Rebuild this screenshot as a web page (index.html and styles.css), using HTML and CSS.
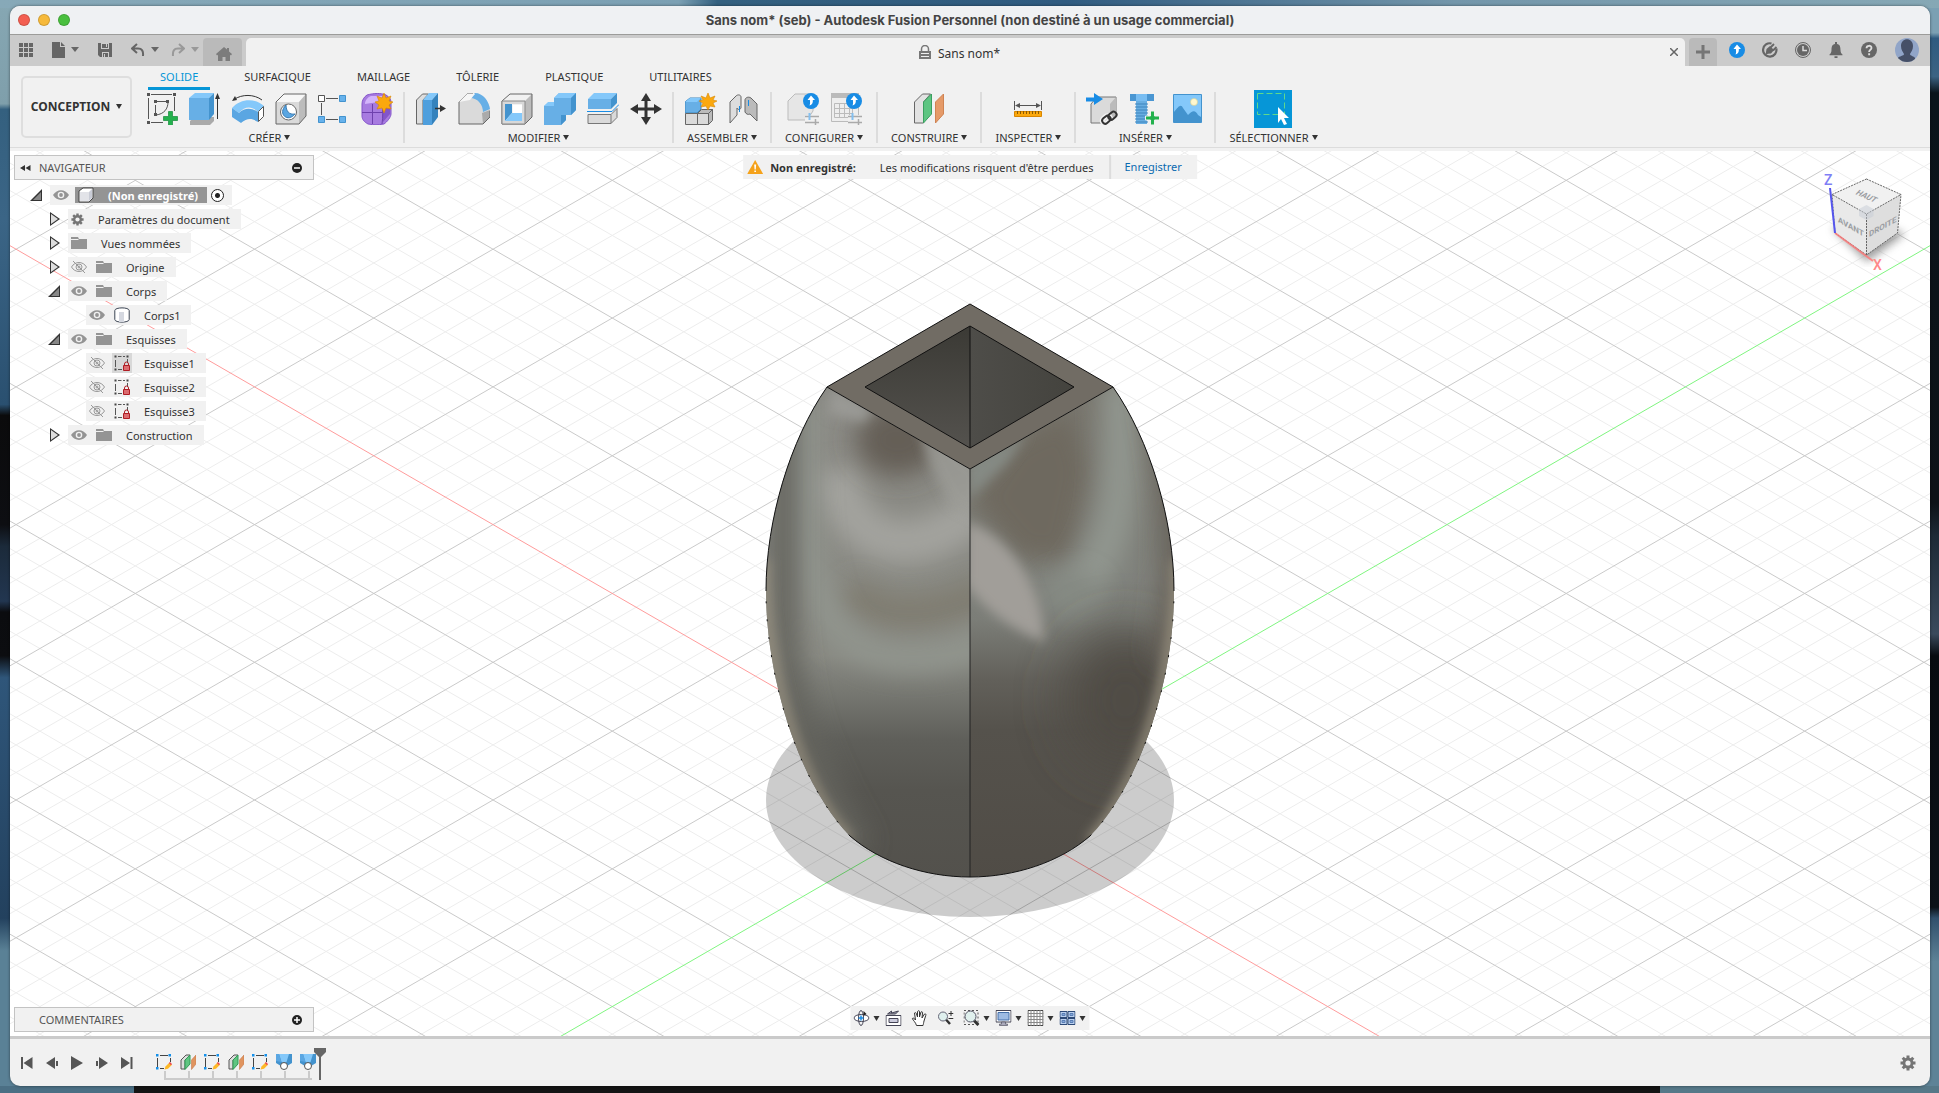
FILE: index.html
```html
<!DOCTYPE html>
<html lang="fr">
<head>
    <meta charset="UTF-8">
    <meta name="viewport" content="width=device-width, initial-scale=1.0">
    <title>Sans nom* - Autodesk Fusion</title>
    <link rel="stylesheet" href="styles.css">
</head>
<body>
    <!-- Shared icons -->
    <svg class="defs" aria-hidden="true">
        <symbol id="eye" viewBox="0 0 16 16">
            <path d="M0 8C4 1.500 12 1.500 16 8 12 14.500 4 14.500 0 8Z" fill="#949494"/>
            <circle cx="8" cy="8" r="3.300" fill="#f1f1f1"/><circle cx="8" cy="8" r="1.900" fill="#949494"/>
        </symbol>
        <symbol id="eye-off" viewBox="0 0 16 16">
            <g fill="none" stroke="#999"><path d="M.5 8C4 2 12 2 15.500 8 12 14 4 14 .5 8Z"/><circle cx="8" cy="8" r="3"/><circle cx="8" cy="8" r="1"/><path d="M2 2l12 12"/></g>
        </symbol>
        <symbol id="folder" viewBox="0 0 16 16">
            <path d="M0 2h7l1 2h8v10H0z" fill="#949494"/><path d="M0 4.500h7.500" stroke="#f1f1f1"/>
        </symbol>
        <symbol id="gear" viewBox="0 0 16 16">
            <g fill="#757575"><path d="M6.500.5h3v15h-3zM.5 6.500h15v3H.5z"/><path d="M6.500.5h3v15h-3zM.5 6.500h15v3H.5z" transform="rotate(45 8 8)"/><circle cx="8" cy="8" r="5.500"/></g>
            <circle cx="8" cy="8" r="2.600" fill="#f1f1f1"/>
        </symbol>
        <symbol id="sketch-lock" viewBox="0 0 16 16">
            <path d="M1.500 5v7M4 1.500h3.500M9 1.500h2M13.500 4v4M4 14.500h4" stroke="#555" fill="none"/>
            <path d="M.5.5h2v2h-2zM12.500.5h2v2h-2zM.5 13.500h2v2h-2z" fill="#444"/>
            <path d="M10.500 11V9a2 2 0 0 1 4 0v2" fill="none" stroke="#b01d24"/>
            <path d="M9.500 10.500h6v5h-6z" fill="#dc6b6f" stroke="#b01d24"/>
        </symbol>
        <symbol id="tl-sketch" viewBox="0 0 16 16">
            <path d="M1.500 4v9M4 1.500h8M14.500 4v4M4 14.500h4" stroke="#444" fill="none"/>
            <path d="M0 0h2.500v2.500H0zM12.500 0H15v2.500h-2.500zM0 13h2.500v2.500H0z" fill="#1590ea"/>
            <path d="M8.500 15.500l1-3 4-4 2.500 2.300-4 4z" fill="#fdb827"/><path d="M12.800 9l1.200-1 2 2-1 1.200z" fill="#ee4a55"/>
        </symbol>
        <symbol id="tl-plane" viewBox="0 0 16 16">
            <path d="M1 6l5-5h4L5 6v9H1z" fill="#ddd" stroke="#555"/>
            <path d="M5 6l5-5v9l-5 5.500z" fill="#5fc581" stroke="#339a57"/><path d="M11.500 6L16 1v9l-4.500 5.500z" fill="#e0945f" stroke="#c87a4c" stroke-width=".6"/>
        </symbol>
        <symbol id="tl-loft" viewBox="0 0 16 16">
            <path d="M0 0h16v9l-5 3H5L0 9z" fill="#4393ce"/><path d="M3 0h10l-2.500 8h-5z" fill="#84c8fa"/><path d="M0 0h3l2.500 8L0 7z" fill="#5aa6e2"/>
            <circle cx="8" cy="12" r="3.500" fill="#fff" stroke="#555"/>
        </symbol>
        <symbol id="upgrade" viewBox="0 0 16 16">
            <circle cx="8" cy="8" r="8" fill="#188ce5"/><path d="M8 2.500l4 4.500H9.800c.3 2.800-.6 4.700-3.300 5.500.8-1.600.6-3.500.4-5.500H4.500z" fill="#fff"/>
        </symbol>
    </svg>

    <div class="window">
        <header class="titlebar">
            <div class="lights">
                <button class="light close" aria-label="Fermer"></button>
                <button class="light minimize" aria-label="Réduire"></button>
                <button class="light zoom" aria-label="Agrandir"></button>
            </div>
            <h1>Sans nom* (seb) - Autodesk Fusion Personnel (non destiné à un usage commercial)</h1>
        </header>

        <div class="tabbar">
            <div class="quick">
                <button class="q-grid" aria-label="Panneau de données"><svg width="14" height="14" viewBox="0 0 14 14"><path d="M0 0h4v4H0zM5 0h4v4H5zM10 0h4v4h-4zM0 5h4v4H0zM5 5h4v4H5zM10 5h4v4h-4zM0 10h4v4H0zM5 10h4v4H5zM10 10h4v4h-4z" fill="#666"/></svg></button>
                <button class="q-file caret" aria-label="Fichier"><svg width="13" height="16" viewBox="0 0 13 16"><path d="M0 0h8v5h5v11H0zM9 0l4 4H9z" fill="#666"/></svg></button>
                <button class="q-save" aria-label="Enregistrer"><svg width="14" height="14" viewBox="0 0 14 14"><path d="M0 0h14v14H2l-2-2z" fill="#666"/><path d="M3 0h8v6H3zM4 9h7v5H4z" fill="#ccc"/><path d="M4 1h6v4H4zM5 10h5v4H5z" fill="#666"/><path d="M8 1h1v3H8zM6 11h1v3H6z" fill="#ccc"/></svg></button>
                <button class="q-undo caret" aria-label="Annuler"><svg width="14" height="14" viewBox="0 0 14 14"><path d="M6 1L1 5.500 6 10M1 5.500h6c4 0 5.500 2.500 5 7.500" fill="none" stroke="#666" stroke-width="2"/></svg></button>
                <button class="q-redo caret" aria-label="Rétablir"><svg width="14" height="14" viewBox="0 0 14 14"><path d="M8 1l5 4.500L8 10M13 5.500H7c-4 0-5.500 2.500-5 7.500" fill="none" stroke="#999" stroke-width="2"/></svg></button>
            </div>
            <button class="home" aria-label="Accueil"><svg width="16" height="14" viewBox="0 0 16 14"><path d="M8 0l3 2.600V1h2v3.500L16 7l-1 1.500-1-.7V14H9.500v-4h-3v4H2V7.800l-1 .7L0 7z" fill="#7c7c7c"/></svg></button>
            <div class="doc-tab">
                <svg width="12" height="14" viewBox="0 0 12 14"><path d="M2.500 7V4a3.500 3.500 0 0 1 7 0v3" fill="none" stroke="#777" stroke-width="1.500"/><path d="M0 6h12v8H0z" fill="#777"/><path d="M2 8.500h8M2 11.500h8" stroke="#eee"/></svg>
                <span>Sans nom*</span>
                <button class="doc-close" aria-label="Fermer l'onglet"><svg width="8" height="8" viewBox="0 0 8 8"><path d="M0 0l8 8M8 0L0 8" stroke="#666" stroke-width="1.500"/></svg></button>
            </div>
            <button class="new-tab" aria-label="Nouvel onglet"><svg width="14" height="14" viewBox="0 0 14 14"><path d="M5.500 0h3v5.500H14v3H8.500V14h-3V8.500H0v-3h5.500z" fill="#757575"/></svg></button>
            <div class="account">
                <button aria-label="Mise à niveau"><svg width="16" height="16"><use href="#upgrade"/></svg></button>
                <button aria-label="Extensions"><svg width="16" height="16" viewBox="0 0 16 16"><path d="M14.300 6.500A6.700 6.700 0 1 1 9.500 1.500" fill="none" stroke="#666" stroke-width="2.200"/><path d="M3.500 13l1-6L8 4l4 4-3 3.500-3 .3z" fill="#666"/><path d="M8.500 5.500L12 2M11 8.500L14.500 5" stroke="#666" stroke-width="1.800"/></svg></button>
                <button aria-label="État des travaux"><svg width="16" height="16" viewBox="0 0 16 16"><circle cx="8" cy="8" r="7.500" fill="none" stroke="#666"/><circle cx="8" cy="8" r="6" fill="#666"/><path d="M8 4v4.500h4" stroke="#ddd" stroke-width="1.500" fill="none"/></svg></button>
                <button aria-label="Notifications"><svg width="16" height="16" viewBox="0 0 16 16"><path d="M7 0h2v2c3 .6 3.500 3 3.500 6 0 2 .8 3.500 2 4.500v.8h-13v-.8c1.200-1 2-2.500 2-4.500 0-3 .5-5.400 3.500-6zM6.500 14.300h3V16h-3z" fill="#666"/></svg></button>
                <button aria-label="Aide"><svg width="16" height="16" viewBox="0 0 16 16"><circle cx="8" cy="8" r="8" fill="#666"/><path d="M5.500 6.200C5.500 3 10.500 3 10.500 6c0 1.800-2.400 1.800-2.400 4" fill="none" stroke="#ddd" stroke-width="1.800"/><path d="M7.200 11.300h1.900v1.900H7.200z" fill="#ddd"/></svg></button>
                <button class="avatar" aria-label="Compte"><svg width="24" height="24" viewBox="0 0 24 24"><defs><clipPath id="round"><circle cx="12" cy="12" r="12"/></clipPath></defs><g clip-path="url(#round)"><path d="M0 0h24v24H0z" fill="#91a5c8"/><path d="M6 8c0-9 12-9 12 0 0 4-2 6-3 8 0 2 4 2 5 4v5H3v-5c1-2 6-2 6-4-1-2-3-4-3-8z" fill="#465067"/></g></svg></button>
            </div>
        </div>

        <div class="ribbon">
            <button class="workspace caret">CONCEPTION</button>
            <div class="ribbon-main">
                <nav class="ribbon-tabs">
                    <button class="active">SOLIDE</button>
                    <button>SURFACIQUE</button>
                    <button>MAILLAGE</button>
                    <button>TÔLERIE</button>
                    <button>PLASTIQUE</button>
                    <button>UTILITAIRES</button>
                </nav>
                <div class="groups">
                    <section class="group">
                        <div class="tools">
                            <button aria-label="Esquisse"><svg viewBox="0 0 32 32"><g fill="none" stroke="#555"><path d="M2.500 5v21M5 1.500h21M28.500 4v14M5 29.500h12M9.500 12v8M11 8.500h9M22 9c0 7-4 12-12 13"/></g><path d="M1 0h3v3H1zM27 0h3v3h-3zM1 28h3v3H1zM8 7h3v3H8zM20 7h3v3h-3zM8 20h3v3H8z" fill="#555"/><path d="M22.500 18.500h4v5h5v4h-5v5h-4v-5h-5v-4h5z" fill="#23b14d" stroke="#168a3a" stroke-width=".7"/></svg></button>
                            <button aria-label="Extrusion"><svg viewBox="0 0 32 32"><path d="M1 28l5-4h19v4l-4 4H1z" fill="#aaa"/><path d="M0 5l6-5h19l-5 5z" fill="#84c8fa"/><path d="M0 5h20v22H0z" fill="#67afe6"/><path d="M20 5l5-5v21l-5 6z" fill="#4393ce"/><path d="M28.500 26V4" stroke="#333"/><path d="M28.500 0l2.500 6h-5z" fill="#333"/></svg></button>
                            <button aria-label="Révolution"><svg viewBox="0 0 32 32"><path d="M2 6.500C10 1 22 1 30 7" fill="none" stroke="#333"/><path d="M0 8l3-5 2 4z" fill="#333"/><path d="M0 15C9 5 23 5 32 13l-6 6c-6-6-13-6-19 1z" fill="#84c8fa"/><path d="M0 15l7 5c6-6 13-5 19-1v10c-6-4-11-4-17 1l-9-6z" fill="#5aa6e2"/><path d="M26.500 18.500l5-5v10l-5 5z" fill="#fff" stroke="#555"/></svg></button>
                            <button aria-label="Perçage"><svg viewBox="0 0 32 32"><path d="M1 9l8-8h22l-7 8z" fill="#f7f7f7"/><path d="M24 9l7-8v22l-7 8z" fill="#bcbcbc"/><path d="M1 9h23v22H1z" fill="#dadada"/><path d="M1 9l8-8h22v22l-7 8H1z" fill="none" stroke="#666"/><circle cx="13.500" cy="19" r="8" fill="#fff" stroke="#666"/><path d="M11 12c-9 9 2 18 9 9-6 1-9-3-9-9z" fill="#5aa6e2" stroke="#3a7ab0"/></svg></button>
                            <button aria-label="Réseau"><svg viewBox="0 0 32 32"><path d="M8 5.500h12M3.500 10v12M8 26.500h12" stroke="#555"/><path d="M.5 2.500h6v6h-6z" fill="#fff" stroke="#555"/><path d="M21.500 2.500h6v6h-6zM.5 23.500h6v6h-6zM21.500 23.500h6v6h-6z" fill="#67b2ec" stroke="#4393ce"/></svg></button>
                            <button aria-label="Créer une forme"><svg viewBox="0 0 32 32"><path d="M1 11c0-4 2-7 5-9 7-2 14-2 19 0 3 2 5 4 5 7v12c0 3-4 8-7 10-6 1-10 1-16 0-4-2-6-5-6-8z" fill="#a77be0" stroke="#8455c9"/><path d="M4 11c0-4 3-7 6-8h12l-4 6c-5 1-10 1-14 2z" fill="#d3b4fb"/><path d="M21 12l8-5v14l-7 8z" fill="#8455c9"/><path d="M11.500 11v20M1 19.500h21M21 10c1 7 1 14 0 21" stroke="#6d40ad" fill="none"/><path d="M23 0l2 5 5-2-2 5 4 1-4 3 2 4-5-1-2 5-2-5-5 1 2-4-4-3 4-1-2-5 5 2z" fill="#fba80d" stroke="#d98600" stroke-width=".6"/></svg></button>
                        </div>
                        <button class="group-label caret">CRÉER</button>
                    </section>
                    <section class="group">
                        <div class="tools">
                            <button aria-label="Appuyer/Tirer"><svg viewBox="0 0 32 32"><path d="M1.500 7l6-6h6L8 7v24H1.500z" fill="#dedede" stroke="#666"/><path d="M8 7l6-7h9l-6 7z" fill="#84c8fa"/><path d="M8 7h9v25H8z" fill="#4f9fdd"/><path d="M17 7l6-7v24l-6 8z" fill="#3482bd"/><path d="M20 15.500h7" stroke="#333" stroke-width="1.500"/><path d="M25 12l6 3.500-6 3.500z" fill="#333"/></svg></button>
                            <button aria-label="Congé"><svg viewBox="0 0 32 32"><path d="M1 9l8-8h6c9 0 17 8 17 17v6l-7 7H1z" fill="#dadada"/><path d="M24 20l8-3v7l-7 7z" fill="#aaa"/><path d="M12 5c8 0 13 7 13 14l7-3C31 8 25 0 17 0z" fill="#67afe6"/><path d="M1 9l8-8h6M32 18v6l-7 7H1V9" fill="none" stroke="#666"/><path d="M1 9l8-8h8l-5 6z" fill="#f6f6f6"/></svg></button>
                            <button aria-label="Coque"><svg viewBox="0 0 32 32"><path d="M24 8l7-7v23l-7 7z" fill="#bcbcbc"/><path d="M1 8l8-7h22v23l-7 7H1z" fill="none" stroke="#666"/><path d="M1 8h23v23H1z" fill="#d8d8d8" stroke="#888"/><path d="M4 11h17v17H4z" fill="#f3f3f3"/><path d="M4 11h7v9l-7 8z" fill="#4393ce"/><path d="M11 20h10v8H4z" fill="#84c8fa"/><path d="M12 12h9v8h-9z" fill="#fff"/></svg></button>
                            <button aria-label="Combiner"><svg viewBox="0 0 32 32"><path d="M0 13l4-3h6V5l5-5h17v17l-5 5h-5v5l-5 5H0z" fill="#67afe6"/><path d="M10 5l5-5h17l-5 5zM0 13l4-4h6v4z" fill="#84c8fa"/><path d="M27 5l5-5v17l-5 5zM17 22h5v5l-5 5z" fill="#4393ce"/></svg></button>
                            <button aria-label="Scinder le corps"><svg viewBox="0 0 32 32"><path d="M1 6l6-6h23l-6 6z" fill="#84c8fa"/><path d="M1 6h23v10H1z" fill="#67afe6"/><path d="M24 6l6-6v10l-6 6z" fill="#4393ce"/><path d="M0 18.500h25l7-7" stroke="#188ce5" fill="none"/><path d="M1 21.500h23l6-6v9l-6 6H1z" fill="#dadada" stroke="#777"/><path d="M24 21.500v9" stroke="#777"/></svg></button>
                            <button aria-label="Déplacer"><svg viewBox="0 0 32 32"><path d="M16 0l5 8h-3.500v6.500H24V11l8 5-8 5v-3.500h-6.500V24H21l-5 8-5-8h3.500v-6.500H8V21l-8-5 8-5v3.500h6.500V8H11z" fill="#333"/></svg></button>
                        </div>
                        <button class="group-label caret">MODIFIER</button>
                    </section>
                    <section class="group">
                        <div class="tools">
                            <button aria-label="Nouveau composant"><svg viewBox="0 0 32 32"><path d="M0 9l5-4h11v11l-4 4H0z" fill="#67afe6" stroke="#3f87bd"/><path d="M0 9l5-4h11l-4 4z" fill="#84c8fa"/><path d="M.5 20.500h12v11H.5zM12.500 20.500h11v11h-11z" fill="#dadada" stroke="#666"/><path d="M23.500 20.500l4-4v11l-4 4zM12.500 20.500l4-4h11l-4 4z" fill="#bbb" stroke="#666"/><path d="M23 0l2 5 5-2-2 4 4 1-4 2 2 4-5-1-2 4-2-4-5 1 2-4-4-2 4-1-2-4 5 2z" fill="#fba80d" stroke="#d98600" stroke-width=".6"/></svg></button>
                            <button aria-label="Liaison"><svg viewBox="0 0 32 32"><path d="M2 9l6-6c2-2 5-1 5 1v11c-1 2-3 2-4 0v7l-7 8z" fill="#ddd" stroke="#666"/><path d="M29 11l-6-6c-3-2-6 0-6 2v12c1 2 3 3 5 2l7 7z" fill="#bbb" stroke="#666"/><path d="M11.500 13v6M20.500 7v6" stroke="#188ce5"/></svg></button>
                        </div>
                        <button class="group-label caret">ASSEMBLER</button>
                    </section>
                    <section class="group">
                        <div class="tools">
                            <button aria-label="Créer une configuration"><svg viewBox="0 0 32 32"><path d="M1 8l7-7h18v17l-6 9H1z" fill="#e6e6e6" stroke="#bbb"/><path d="M18 22h14v10H18z" fill="#f1f1f1"/><path d="M18 23.500h14M18 29.500h14M28.500 26v6" stroke="#aaa" stroke-width="1.500"/><path d="M22.500 20v7" stroke="#84c0f0" stroke-width="2"/><use href="#upgrade" x="16" y="0" width="16" height="16"/></svg></button>
                            <button aria-label="Tableau de configuration"><svg viewBox="0 0 32 32"><path d="M1.500 1.500h27v27h-27z" fill="#eee" stroke="#bbb"/><path d="M1 0h28v5H1z" fill="#bbb"/><path d="M4.500 10.500h18v14h-18zM9.500 10v14M14.500 10v14M19.500 10v14M4 15.500h18M4 20.500h18" stroke="#bbb" fill="none"/><path d="M18 22h14v10H18z" fill="#f1f1f1"/><path d="M18 23.500h14M18 29.500h14M28.500 26v6" stroke="#aaa" stroke-width="1.500"/><path d="M22.500 20v7" stroke="#84c0f0" stroke-width="2"/><use href="#upgrade" x="16" y="0" width="16" height="16"/></svg></button>
                        </div>
                        <button class="group-label caret">CONFIGURER</button>
                    </section>
                    <section class="group">
                        <div class="tools">
                            <button aria-label="Plan décalé"><svg viewBox="0 0 32 32"><path d="M1.500 9l8-8h8l-7 8v21h-9z" fill="#e2e2e2" stroke="#666"/><path d="M10.500 9l8-8v20l-8 9z" fill="#5dc581" stroke="#3aa060"/><path d="M22.500 9l8-8v20l-8 9z" fill="#e59a68" stroke="#cf8352"/></svg></button>
                        </div>
                        <button class="group-label caret">CONSTRUIRE</button>
                    </section>
                    <section class="group">
                        <div class="tools">
                            <button aria-label="Mesurer"><svg viewBox="0 0 32 32"><path d="M2.500 8v9M29.500 8v9M4 12.500h24" stroke="#555"/><path d="M3 12.500L8 10v5zM29 12.500L24 10v5z" fill="#555"/><path d="M2.500 18.500h27v5h-27z" fill="#fba80d" stroke="#d98600"/><path d="M5.500 18v3M8.500 18v3M11.500 18v3M14.500 18v3M17.500 18v3M20.500 18v3M23.500 18v3M26.500 18v3" stroke="#8a5a00"/></svg></button>
                        </div>
                        <button class="group-label caret">INSPECTER</button>
                    </section>
                    <section class="group">
                        <div class="tools">
                            <button aria-label="Insérer un dérivé"><svg viewBox="0 0 32 32"><path d="M5 11l6-7h19v18l-6 8H5z" fill="#dadada" stroke="#777"/><path d="M24 11l6-7v18l-6 8z" fill="#bbb"/><path d="M0 4.500h8V0l9 6-9 6V8.500H0z" fill="#188ce5"/><g fill="none" stroke="#f1f1f1" stroke-width="5"><rect x="16" y="24" width="9" height="6" rx="3" transform="rotate(-40 20 27)"/></g><g fill="none" stroke="#333" stroke-width="2"><rect x="16" y="24" width="9" height="6" rx="3" transform="rotate(-40 20 27)"/><rect x="22" y="20" width="9" height="6" rx="3" transform="rotate(-40 26 23)"/></g></svg></button>
                            <button aria-label="Insérer une fixation"><svg viewBox="0 0 32 32"><path d="M1 1h24v7H1z" fill="#4a96d2"/><path d="M7 1h11v7H7z" fill="#78bdf2"/><path d="M7 8h11v23H7z" fill="#68aee2"/><path d="M6 11h13M6 14h13M6 17h13M6 20h13M6 23h13M6 26h13M6 29h13" stroke="#3c84bd"/><path d="M21.500 18h4v5h5v4h-5v5h-4v-5h-5v-4h5z" fill="#23b14d" stroke="#f1f1f1"/></svg></button>
                            <button aria-label="Insérer un canevas"><svg viewBox="0 0 32 32"><path d="M1.500 1.500h28v28h-28z" fill="#84c8fa" stroke="#4393ce"/><path d="M2 19c4-5 7-9 9-4l5 7c4-4 7-6 10 0l3 2v5H2z" fill="#4393ce"/><circle cx="22" cy="9" r="3.500" fill="#fff8cf" stroke="#d8cf8c" stroke-width=".6"/></svg></button>
                        </div>
                        <button class="group-label caret">INSÉRER</button>
                    </section>
                    <section class="group">
                        <div class="tools">
                            <button class="selected" aria-label="Sélectionner"><svg viewBox="0 0 38 38"><path d="M3.500 3.500h27v21h-27z" fill="none" stroke="#5fd98a" stroke-dasharray="6 3"/><path d="M24 17l11 11h-5l3 6-3 1-3-6-3 4z" fill="#fff"/></svg></button>
                        </div>
                        <button class="group-label caret">SÉLECTIONNER</button>
                    </section>
                </div>
            </div>
        </div>

        <main class="viewport">
            <svg class="scene" viewBox="10 151 1920 885" preserveAspectRatio="xMidYMid slice" role="img" aria-label="Vase">
                <defs>
                    <filter id="b6" filterUnits="userSpaceOnUse" x="660" y="260" width="620" height="720"><feGaussianBlur stdDeviation="6"/></filter>
                    <filter id="b12" filterUnits="userSpaceOnUse" x="660" y="260" width="620" height="720"><feGaussianBlur stdDeviation="12"/></filter>
                    <filter id="b25" filterUnits="userSpaceOnUse" x="660" y="260" width="620" height="720"><feGaussianBlur stdDeviation="25"/></filter>
                    <clipPath id="face-left"><path d="M827 387L970 469V877C925 877 880 862 850 836 800 785 766 680 766 591 766 520 790 440 827 387Z"/></clipPath>
                    <clipPath id="face-right"><path d="M1113 387L970 469V877C1015 877 1060 862 1090 836 1140 785 1174 680 1174 591 1174 520 1150 440 1113 387Z"/></clipPath>
                    <linearGradient id="base-left" x1="0" y1="0" x2="0" y2="1"><stop offset="0" stop-color="#8a8984"/><stop offset=".55" stop-color="#888982"/><stop offset=".63" stop-color="#757670"/><stop offset=".72" stop-color="#5f5f5a"/><stop offset=".82" stop-color="#565550"/><stop offset="1" stop-color="#53514c"/></linearGradient>
                    <linearGradient id="base-right" x1="0" y1="0" x2="0" y2="1"><stop offset="0" stop-color="#77746c"/><stop offset=".4" stop-color="#7f817b"/><stop offset=".48" stop-color="#7b7d77"/><stop offset=".6" stop-color="#62605a"/><stop offset=".7" stop-color="#55524c"/><stop offset="1" stop-color="#504c46"/></linearGradient>
                    <linearGradient id="in-left" x1="0" y1="0" x2="0" y2="1"><stop offset="0" stop-color="#3b3a35"/><stop offset="1" stop-color="#54524e"/></linearGradient>
                    <linearGradient id="in-right" x1="0" y1="0" x2="1" y2="0"><stop offset="0" stop-color="#4e4d49"/><stop offset="1" stop-color="#44433e"/></linearGradient>
                </defs>
                <g id="grid"></g>
                <ellipse cx="970" cy="800" rx="204" ry="117" fill="#000" opacity=".2"/>

                <g clip-path="url(#face-left)">
                    <path d="M760 380h212v500H760z" fill="url(#base-left)"/>
                    <path d="M835 470C850 560 930 560 985 500" fill="none" stroke="#a3a39e" stroke-width="44" filter="url(#b12)"/>
                    <ellipse cx="898" cy="440" rx="42" ry="36" fill="#655f56" filter="url(#b12)"/>
                    <path d="M915 410l65 60v50l-30-15-22-45z" fill="#9c9c97" opacity=".8" filter="url(#b6)"/>
                    <path d="M848 590C880 620 930 620 990 590" fill="none" stroke="#7f7b6f" stroke-width="30" filter="url(#b12)"/>
                    <path d="M808 400C798 500 805 610 850 640 880 665 940 665 990 640" fill="none" stroke="#92968f" stroke-width="26" filter="url(#b12)"/>
                    <path d="M783 380V620C790 720 820 780 860 850" fill="none" stroke="#63645d" stroke-width="26" filter="url(#b12)"/>
                    <path d="M832 388l40 20-8 14-36-8z" fill="#9a9a95" filter="url(#b6)"/>
                    <path d="M764 560C764 690 810 800 850 840" fill="none" stroke="#948d7d" stroke-width="10" filter="url(#b6)"/>
                </g>
                <g clip-path="url(#face-right)">
                    <path d="M968 380h212v500H968z" fill="url(#base-right)"/>
                    <path d="M1010 440l60-30 20 60-20 90-50 0-50-60z" fill="#6e695f" filter="url(#b12)"/>
                    <path d="M1120 380C1120 470 1130 540 1075 590" fill="none" stroke="#91968f" stroke-width="38" filter="url(#b12)"/>
                    <ellipse cx="1070" cy="595" rx="30" ry="22" fill="#868b84" filter="url(#b12)"/>
                    <ellipse cx="1125" cy="700" rx="60" ry="70" fill="#504c44" filter="url(#b25)"/>
                    <path d="M966 522C1010 535 1044 590 1044 642 1010 628 985 610 966 584z" fill="#a19e99" filter="url(#b6)"/>
                    <path d="M968 462l60-30-20 30-40 38z" fill="#858a84" filter="url(#b6)"/>
                    <path d="M1158 400C1180 480 1180 580 1165 660" fill="none" stroke="#655f56" stroke-width="26" filter="url(#b12)"/>
                    <path d="M1177 560C1177 690 1130 800 1090 842" fill="none" stroke="#958e7d" stroke-width="10" filter="url(#b6)"/>
                </g>
                <path d="M970 304L1113 387 970 469 827 387Z" fill="#716c64"/>
                <path d="M970 326L865 387l105 61z" fill="url(#in-left)"/>
                <path d="M970 326l104 61-104 61z" fill="url(#in-right)"/>
                <g fill="none" stroke="#111" stroke-linejoin="round">
                    <path d="M970 304L1113 387 970 469 827 387ZM970 326l104 61-104 61-105-61zM970 326v122"/>
                    <path d="M970 469V877" stroke="#222"/>
                    <path d="M827 387C790 440 766 520 766 591M1113 387C1150 440 1174 520 1174 591M850 836C880 862 925 877 970 877 1015 877 1060 862 1090 836"/>
                    <path d="M850 836C800 785 766 680 766 591M1090 836C1140 785 1174 680 1174 591" stroke-dasharray="2 16"/>
                </g>
            </svg>

            <aside class="panel navigator">
                <div class="panel-head">
                    <button aria-label="Replier"><svg width="11" height="6" viewBox="0 0 11 6"><path d="M5 0v6L0 3zM10.500 0v6l-5-3z" fill="#333"/></svg></button>
                    <h2>NAVIGATEUR</h2>
                    <button aria-label="Masquer"><svg width="10" height="10" viewBox="0 0 10 10"><circle cx="5" cy="5" r="5" fill="#222"/><path d="M2 5h6" stroke="#fff" stroke-width="1.500"/></svg></button>
                </div>
                <ul class="tree">
                    <li class="l0 open"><button class="toggle" aria-label="Réduire"></button><div class="node root"><svg><use href="#eye"/></svg><span class="root-name"><svg viewBox="0 0 16 16"><path d="M1 4l4-3h10v10l-4 4H1z" fill="#fff" stroke="#444"/><path d="M2 5h9v9H2z" fill="#e2e3e8"/><path d="M11 5l3-3v9l-3 3z" fill="#c9ccd6"/></svg><b>(Non enregistré)</b></span><input type="radio" name="active" aria-label="Activer" checked></div></li>
                    <li class="l1"><button class="toggle" aria-label="Développer"></button><div class="node params"><svg><use href="#gear"/></svg><span>Paramètres du document</span></div></li>
                    <li class="l1"><button class="toggle" aria-label="Développer"></button><div class="node"><svg><use href="#folder"/></svg><span>Vues nommées</span></div></li>
                    <li class="l1"><button class="toggle" aria-label="Développer"></button><div class="node"><svg><use href="#eye-off"/></svg><svg><use href="#folder"/></svg><span>Origine</span></div></li>
                    <li class="l1 open"><button class="toggle" aria-label="Réduire"></button><div class="node"><svg><use href="#eye"/></svg><svg><use href="#folder"/></svg><span>Corps</span></div></li>
                    <li class="l2"><div class="node"><svg><use href="#eye"/></svg><svg viewBox="0 0 16 16"><path d="M.8 3.500C1 0 15 0 15.200 3.500v9C15 16 1 16 .8 12.500z" fill="#fff" stroke="#3a4352"/><path d="M5 5h5v10H5z" fill="#d5d8e0"/></svg><span>Corps1</span></div></li>
                    <li class="l1 open"><button class="toggle" aria-label="Réduire"></button><div class="node"><svg><use href="#eye"/></svg><svg><use href="#folder"/></svg><span>Esquisses</span></div></li>
                    <li class="l2"><div class="node"><svg><use href="#eye-off"/></svg><svg class="hot"><use href="#sketch-lock"/></svg><span>Esquisse1</span></div></li>
                    <li class="l2"><div class="node"><svg><use href="#eye-off"/></svg><svg><use href="#sketch-lock"/></svg><span>Esquisse2</span></div></li>
                    <li class="l2"><div class="node"><svg><use href="#eye-off"/></svg><svg><use href="#sketch-lock"/></svg><span>Esquisse3</span></div></li>
                    <li class="l1"><button class="toggle" aria-label="Développer"></button><div class="node"><svg><use href="#eye"/></svg><svg><use href="#folder"/></svg><span>Construction</span></div></li>
                </ul>
            </aside>

            <div class="notice">
                <svg width="16" height="14" viewBox="0 0 16 14"><path d="M8 0l8 14H0z" fill="#f5a21b"/><path d="M7 4.500h2l-.4 5H7.400zM7.200 10.500h1.600V12H7.200z" fill="#fff"/></svg>
                <b>Non enregistré:</b>
                <span>Les modifications risquent d'être perdues</span>
                <a href="#enregistrer">Enregistrer</a>
            </div>

            <svg class="viewcube" width="90" height="105" viewBox="1820 171 90 105">
                <defs><filter id="b4"><feGaussianBlur stdDeviation="4"/></filter></defs>
                <path d="M1832 228l35 34 38-28-34-14z" fill="#777" opacity=".7" filter="url(#b4)"/>
                <path d="M1866.500 179l34.500 15.500-34.500 19.500-34.500-19.500z" fill="#f1f1f1"/>
                <path d="M1832 194.500l34.500 19.500v41l-31.500-22z" fill="#e9e9e9"/>
                <path d="M1901 194.500l-34.500 19.500v41l31-22z" fill="#dedede"/>
                <path d="M1866.500 179l34.500 15.500-34.500 19.500-34.500-19.500zM1832 194.500l3 38.500 31.500 22 31-22 3.500-38.500M1866.500 214v41" fill="none" stroke="#666" stroke-dasharray="2 1"/>
                <path d="M1859 209l7.500-4 7 4v7l-7 4-7.500-4z" fill="#c5cbd6" opacity=".5"/>
                <path d="M1835 233l38 28" stroke="#f77" stroke-width="2" opacity=".8"/>
                <path d="M1830 188l5 45" stroke="#55e" stroke-width="2"/>
                <g class="cube-text">
                    <text transform="translate(1855 194) rotate(24) skewX(-20)">HAUT</text>
                    <text transform="translate(1838 222) skewY(30)">AVANT</text>
                    <text transform="translate(1869 237) skewY(-29)">DROITE</text>
                </g>
                <text class="axis-z" x="1824" y="185">Z</text>
                <text class="axis-x" x="1873" y="270">X</text>
            </svg>

            <div class="panel comments">
                <div class="panel-head">
                    <h2>COMMENTAIRES</h2>
                    <button aria-label="Afficher"><svg width="10" height="10" viewBox="0 0 10 10"><circle cx="5" cy="5" r="5" fill="#222"/><path d="M2 5h6M5 2v6" stroke="#fff" stroke-width="1.500"/></svg></button>
                </div>
            </div>

            <div class="navbar">
                <button class="caret" aria-label="Orbite"><svg viewBox="0 0 16 16"><ellipse cx="8" cy="8" rx="7.500" ry="3.500" fill="#fff" stroke="#445"/><ellipse cx="7.500" cy="8" rx="2.500" ry="7.500" fill="none" stroke="#445"/><path d="M7.500 5.500v5M5 8h5" stroke="#188ce5" stroke-width="1.500"/><path d="M10 1l3 3-3 2z" fill="#222"/></svg></button>
                <button aria-label="Regarder"><svg viewBox="0 0 16 16"><path d="M.5 5.500h15v10H.5z" fill="#fff" stroke="#445"/><path d="M3.500 8.500h9v4h-9z" fill="#ccd" stroke="#445"/><path d="M2 4l4-3v2l7-2-3 3z" fill="#99a" stroke="#445"/></svg></button>
                <button aria-label="Panoramique"><svg viewBox="0 0 16 16"><path d="M5 15.500C4 12 2 11 .8 8.500 1.800 7.500 3 8.500 4 10L3 3c1-1 1.800 0 2 1l1 3V1.500c.5-1 2-1 2 0V7l1.500-5c.8-.8 1.800 0 1.500 1l-.5 5 2.500-4c1-.5 1.700.3 1.300 1.300L12.500 11c-.5 2-.5 3-1 4.500z" fill="#fff" stroke="#333"/></svg></button>
                <button aria-label="Zoom"><svg viewBox="0 0 16 16"><path d="M8 9l4.500 5" stroke="#333" stroke-width="2.500"/><circle cx="5.500" cy="6.500" r="4.500" fill="#dff0ee" stroke="#667"/><path d="M11 3.500h5M13.500 1v5M11 8.500h5" stroke="#333"/></svg></button>
                <button class="caret" aria-label="Fenêtre de zoom"><svg viewBox="0 0 16 16"><path d="M.5.5h14v14H.5z" fill="none" stroke="#555" stroke-dasharray="2 2"/><path d="M10 10l5 5" stroke="#333" stroke-width="3"/><circle cx="7" cy="6.500" r="5.500" fill="#e0f0ed" stroke="#556"/></svg></button>
                <button class="caret" aria-label="Affichage"><svg viewBox="0 0 16 16"><path d="M.5.500h15v11.500H.5z" fill="#fff" stroke="#445"/><path d="M2.500 2.500h11v7.500h-11z" fill="#9dbbe3" stroke="#446fa8"/><path d="M6 12h4v2h2v1.500H4V14h2z" fill="#aab" stroke="#445" stroke-width=".6"/></svg></button>
                <button class="caret" aria-label="Grille"><svg viewBox="0 0 16 16"><path d="M.5.5h15v15H.5z" fill="#fff" stroke="#444"/><path d="M3.500 0v16M6.500 0v16M9.500 0v16M12.500 0v16M0 3.500h16M0 6.500h16M0 9.500h16M0 12.500h16" stroke="#888"/></svg></button>
                <button class="caret" aria-label="Fenêtres"><svg viewBox="0 0 16 16"><path d="M.5 1.500h7v6h-7zM8.500 1.500h7v6h-7zM.5 8.500h7v6h-7zM8.500 8.500h7v6h-7z" fill="#bcd1ef" stroke="#2d4a77"/><path d="M2.500 3.500h3v2h-3zM10.500 3.500h3v2h-3zM2.500 10.500h3v2h-3zM10.500 10.500h3v2h-3z" fill="#88aadb" stroke="#5a7fb5"/></svg></button>
            </div>
        </main>

        <footer class="timeline">
            <div class="player">
                <button aria-label="Début"><svg viewBox="0 0 12 12"><path d="M0 0h2v12H0zM11.500 0v12L2.500 6z" fill="#555"/></svg></button>
                <button aria-label="Reculer"><svg viewBox="0 0 12 12"><path d="M9 0v12L0 6zM10 4h2v5h-2z" fill="#555"/></svg></button>
                <button aria-label="Lecture"><svg viewBox="0 0 12 12"><path d="M0-1l12 7-12 7z" fill="#555"/></svg></button>
                <button aria-label="Avancer"><svg viewBox="0 0 12 12"><path d="M3 0v12l9-6zM0 4h2v5H0z" fill="#555"/></svg></button>
                <button aria-label="Fin"><svg viewBox="0 0 12 12"><path d="M0 0v12l9-6zM9.500 0h2v12h-2z" fill="#555"/></svg></button>
            </div>
            <ol class="features">
                <li><svg><use href="#tl-sketch"/></svg></li>
                <li><svg><use href="#tl-plane"/></svg></li>
                <li><svg><use href="#tl-sketch"/></svg></li>
                <li><svg><use href="#tl-plane"/></svg></li>
                <li><svg><use href="#tl-sketch"/></svg></li>
                <li><svg><use href="#tl-loft"/></svg></li>
                <li><svg><use href="#tl-loft"/></svg></li>
            </ol>
            <svg class="marker" width="12" height="32" viewBox="0 0 12 32"><path d="M0 0h12v4L7 9v23H5V9L0 4z" fill="#666"/></svg>
            <button class="settings" aria-label="Préférences"><svg width="16" height="16"><use href="#gear"/></svg></button>
        </footer>
    </div>

    <script src="grid.js"></script>
</body>
</html>
```

FILE: styles.css
```css
* {
    margin: 0;
    padding: 0;
    box-sizing: border-box;
}

body {
    height: 100vh;
    padding: 6px 9px 7px 10px;
    font-family: "Noto Sans", "Open Sans", sans-serif;
    font-size: 11px;
    color: #333;
    background:
        linear-gradient(to right, #4b6f84 134px, #141414 134px, #141414 calc(100% - 279px), #567888 calc(100% - 279px)) bottom / 100% 7px no-repeat,
        linear-gradient(to right, #87a9b8, #7ba0b3 35%, #33607f 37%, #2f5b80 55%, #7396aa 75%, #86a8b5) top / 100% 8px no-repeat,
        linear-gradient(#86a7b3, #7f9fab 9.500%, #34607f 10%, #3b6586 20%, #2a5070 37%, #0b0b0c 38%, #0d0e12 48%, #1b2a3a 50%, #223650 55%, #0b0c0f 56%, #0c0d10 60%, #2f567a 62%, #23415e 84%, #5a8196 87%, #5a8196) left / 20px 100% no-repeat,
        linear-gradient(#7ba0b3, #7ba0b3 3%, #2f5b80 3.500%, #3c6383 7%, #0a141b 8.500%, #0d1217 46%, #1d2a36 49%, #3a4a5c 58%, #070b10 60%, #0c1218 83%, #31506c 84%, #5e8397 88%, #5e8397) right / 20px 100% no-repeat,
        #23415e;
}

button {
    border: none;
    background: none;
    font: inherit;
    color: inherit;
}

svg {
    display: block;
    flex: none;
}

.defs {
    position: absolute;
    width: 0;
    height: 0;
}

.window {
    display: flex;
    flex-direction: column;
    height: 100%;
    border-radius: 10px;
    overflow: hidden;
    background: #f1f1f1;
    box-shadow: 0 0 3px rgba(0, 0, 0, 0.5);
}

.caret::after {
    content: "";
    border: 3px solid transparent;
    border-top: 5px solid currentColor;
    border-bottom: none;
}

/* Title bar */
.titlebar {
    position: relative;
    display: flex;
    align-items: center;
    justify-content: center;
    height: 29px;
    background: #eff1f3;
    border-bottom: 1px solid #9c9c9a;
}

.titlebar h1 {
    font-family: Inter, sans-serif;
    font-size: 13px;
    font-weight: 700;
    color: #444;
}

.lights {
    position: absolute;
    left: 8px;
    display: flex;
    gap: 8px;
}

.light {
    width: 12px;
    height: 12px;
    border-radius: 50%;
    border: 1px solid rgba(0, 0, 0, 0.15);
}

.light.close { background: #f35e51; }
.light.minimize { background: #f6b93a; }
.light.zoom { background: #49bf3e; }

/* Document tabs */
.tabbar {
    display: flex;
    align-items: flex-end;
    height: 31px;
    background: #cbcbcb;
}

.quick {
    display: flex;
    align-items: center;
    height: 31px;
    width: 193px;
    padding: 0 0 2px 9px;
    color: #666;
}

.quick button {
    display: flex;
    align-items: center;
    gap: 6px;
}

.quick .caret::after {
    border-width: 5px 4px 0;
}

.q-file { margin-left: 19px; }
.q-save { margin-left: 19px; }
.q-undo { margin-left: 19px; }
.q-redo { margin-left: 12px; color: #999; }

.home,
.new-tab {
    display: flex;
    align-items: center;
    justify-content: center;
    height: 28px;
    background: #bababa;
    border-radius: 4px 4px 0 0;
}

.home {
    width: 39px;
    padding: 3px 0 0 3px;
}

.doc-tab {
    position: relative;
    display: flex;
    flex: 1;
    align-items: center;
    justify-content: center;
    gap: 7px;
    height: 28px;
    margin: 0 4px;
    padding-right: 12px;
    background: #f1f1f1;
    border-radius: 5px 5px 0 0;
}

.doc-tab span {
    font-size: 12px;
    padding-top: 2px;
}

.doc-close {
    position: absolute;
    right: 7px;
}

.new-tab {
    width: 28px;
}

.account {
    display: flex;
    align-items: center;
    gap: 17px;
    height: 31px;
    padding: 0 11px 2px 12px;
}

.avatar {
    margin-left: 1px;
}

/* Ribbon */
.ribbon {
    display: flex;
    height: 85px;
    padding-left: 11px;
    border-bottom: 3px solid #f1f1f1;
    box-shadow: inset 0 -1px #dcdcdc;
}

.workspace {
    display: flex;
    align-items: center;
    justify-content: center;
    gap: 6px;
    width: 111px;
    height: 62px;
    margin-top: 10px;
    padding-bottom: 2px;
    border: 2px solid #dedede;
    border-radius: 5px;
    font-size: 12px;
    font-weight: 700;
}

.ribbon-main {
    flex: 1;
}

.ribbon-tabs {
    display: flex;
    gap: 22px;
    height: 24px;
    padding-left: 16px;
}

.ribbon-tabs button {
    height: 24px;
    padding: 0 12px;
    border-bottom: 3px solid transparent;
    white-space: nowrap;
}

.ribbon-tabs .active {
    color: #0696d7;
    border-color: #0696d7;
}

.groups {
    display: flex;
    padding-left: 4px;
    height: 57px;
}

.group {
    display: flex;
    flex-direction: column;
    align-items: center;
    padding: 0 10px;
    border-right: 2px solid transparent;
    background: linear-gradient(#dcdcdc, #dcdcdc) right 2px / 2px 51px no-repeat border-box;
}

.group:last-child {
    background: none;
}

.tools {
    display: flex;
    align-items: center;
    gap: 11px;
    height: 38px;
}

.tools svg {
    width: 32px;
    height: 32px;
}

.tools .selected,
.tools .selected svg {
    width: 38px;
    height: 38px;
    background: #0696d7;
}

.group-label {
    display: flex;
    align-items: center;
    gap: 3px;
    height: 19px;
    margin: 0 3px;
    white-space: nowrap;
}

/* Viewport */
.viewport {
    position: relative;
    flex: 1;
    min-height: 0;
    overflow: hidden;
    background: #fff;
}

.scene {
    width: 100%;
    height: 100%;
}

.grid-minor { stroke: #ededed; }
.grid-major { stroke: #cacaca; }
.axis-red { stroke: #ff9c9c; }
.axis-green { stroke: #80f580; }

.panel {
    position: absolute;
    left: 4px;
    width: 300px;
}

.navigator { top: 4px; }
.comments { bottom: 4px; }

.panel-head {
    display: flex;
    align-items: center;
    height: 25px;
    padding: 0 11px 0 5px;
    background: #f1f1f1;
    border: 1px solid #c3c3c3;
}

.panel-head h2 {
    flex: 1;
    margin-left: 8px;
    font-size: 11px;
    font-weight: 400;
    color: #555;
}

.comments h2 {
    margin-left: 19px;
}

.tree {
    padding-top: 3px;
    list-style: none;
}

.tree li {
    display: flex;
    align-items: center;
    height: 24px;
}

.l0 { padding-left: 14px; }
.l1 { padding-left: 32px; }
.l2 { padding-left: 72px; }

.toggle {
    width: 22px;
    height: 14px;
    background: #333;
    clip-path: polygon(4px 0, 14px 7px, 4px 14px);
    position: relative;
}

.toggle::before {
    content: "";
    position: absolute;
    inset: 0;
    background: #ddd;
    clip-path: polygon(5px 2px, 12px 7px, 5px 12px);
}

.open .toggle {
    clip-path: polygon(14px 1px, 14px 13px, 2px 13px);
}

.open .toggle::before {
    background: #888;
    clip-path: polygon(13px 4px, 13px 12px, 5px 12px);
}

.node {
    display: flex;
    align-items: center;
    gap: 9px;
    height: 20px;
    padding: 0 11px 0 3px;
    background: #f1f1f1;
    white-space: nowrap;
}

.node svg {
    width: 16px;
    height: 16px;
}

.node > span:last-child {
    margin-left: 5px;
}

.node.params > svg {
    width: 13px;
    height: 13px;
}

.node.root {
    gap: 4px;
    padding-right: 8px;
}

.root-name {
    display: flex;
    align-items: center;
    gap: 14px;
    height: 16px;
    margin-left: 2px;
    padding: 0 9px 0 3px;
    background: #949494;
    color: #fff;
}

.root input {
    appearance: none;
    width: 13px;
    height: 13px;
    border: 1px solid #222;
    border-radius: 50%;
    background: radial-gradient(#222 2px, #fff 3px);
}

.hot {
    background: #d8d8d8;
    box-shadow: 0 0 0 2px #d8d8d8;
}

.notice {
    position: absolute;
    top: 4px;
    left: 50%;
    transform: translateX(-50%);
    display: flex;
    align-items: center;
    height: 24px;
    padding-left: 4px;
    background: #f1f1f1;
    white-space: nowrap;
}

.notice b { margin: 0 24px 0 7px; }

.notice a {
    margin-left: 16px;
    padding: 0 15px 0 13px;
    border-left: 2px solid #dcdcdc;
    line-height: 24px;
    color: #0a6ab0;
    text-decoration: none;
}

.viewcube {
    position: absolute;
    top: 20px;
    right: 20px;
}

.cube-text {
    font-family: Roboto, sans-serif;
    font-size: 8px;
    font-weight: 700;
    fill: #9a9da2;
}

.axis-z,
.axis-x {
    font-family: Roboto, sans-serif;
    font-size: 14px;
    font-weight: 500;
    fill: #7f7ff5;
}

.axis-x { fill: #f88; }

.navbar {
    position: absolute;
    bottom: 6px;
    left: 50%;
    transform: translateX(-50%);
    display: flex;
    align-items: center;
    gap: 6px;
    height: 24px;
    padding: 0 4px 0 3px;
    background: #f1f1f1;
}

.navbar button {
    display: flex;
    align-items: center;
    gap: 4px;
}

.navbar button:not(.caret) {
    margin-right: 4px;
}

.navbar svg {
    width: 16px;
    height: 16px;
}

/* Timeline */
.timeline {
    display: flex;
    align-items: center;
    height: 50px;
    padding: 0 14px 0 11px;
    border-top: 3px solid #cacaca;
}

.player {
    display: flex;
    gap: 13px;
}

.player svg {
    width: 12px;
    height: 12px;
    overflow: visible;
}

.features {
    display: flex;
    gap: 8px;
    margin-left: 23px;
    padding-top: 9px;
    list-style: none;
}

.features li {
    position: relative;
    padding-bottom: 10px;
}

/* bracket that ties the features together */
.features li::after {
    content: "";
    position: absolute;
    left: 8px;
    bottom: 0;
    width: 24px;
    height: 7px;
    border-left: 2px solid #cbcbcb;
    border-bottom: 2px solid #cbcbcb;
}

.features li:last-child::after {
    width: 2px;
}

.features svg {
    width: 16px;
    height: 16px;
}

.marker {
    margin-top: 2px;
    margin-left: -2px;
}

.settings {
    margin-left: auto;
}
```

FILE: grid.js
```js
// Isometric ground grid, drawn around the origin of the model
const ORIGIN = { x: 970, y: 800 };
const SLOPE = 0.5774;
const STEP = 27.54;
const REACH = 2000;

const grid = document.getElementById('grid');

function addLine(offset, dir, className) {
    const line = document.createElementNS('http://www.w3.org/2000/svg', 'line');
    line.setAttribute('x1', ORIGIN.x - REACH);
    line.setAttribute('y1', ORIGIN.y + offset - dir * REACH * SLOPE);
    line.setAttribute('x2', ORIGIN.x + REACH);
    line.setAttribute('y2', ORIGIN.y + offset + dir * REACH * SLOPE);
    line.setAttribute('class', className);
    grid.appendChild(line);
}

for (const major of [false, true]) {
    for (let i = -50; i <= 50; i++) {
        if (i === 0 || (i % 5 === 0) !== major) continue;
        const name = major ? 'grid-major' : 'grid-minor';
        addLine(i * STEP, 1, name);
        addLine(i * STEP, -1, name);
    }
}

addLine(0, 1, 'axis-red');
addLine(0, -1, 'axis-green');
```
